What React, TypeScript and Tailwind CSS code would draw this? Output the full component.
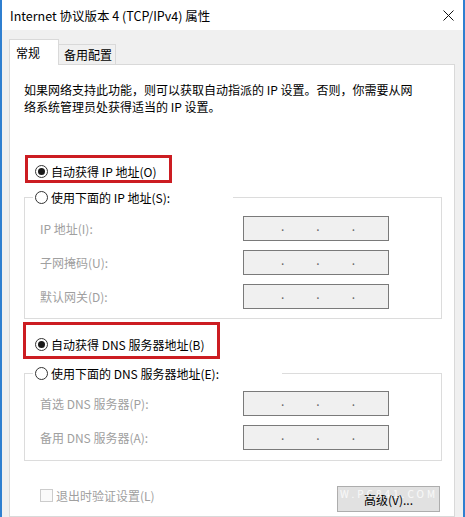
function Radio({ checked }: { checked?: boolean }) {
  return (
    <span className="flex h-[13px] w-[13px] shrink-0 items-center justify-center rounded-full border border-[#333333] bg-white">
      {checked && <span className="h-[7px] w-[7px] rounded-full bg-[#1a1a1a]" />}
    </span>
  );
}

function IpBox() {
  return (
    <div className="flex h-[25px] w-[146px] items-start gap-[32px] border border-[#7a7a7a] bg-[#f0f0f0] pl-[37px] pt-[3px] text-[12px] leading-[12px] text-[#666666]">
      <span>.</span>
      <span>.</span>
      <span>.</span>
    </div>
  );
}

function Field({ label }: { label: string }) {
  return (
    <div className="flex h-[25px] items-center">
      <span className="w-[203px] text-[#a0a0a0]">{label}</span>
      <IpBox />
    </div>
  );
}

export default function App() {
  return (
    <div className="flex h-[517px] w-[465px] flex-col overflow-hidden border-x-2 border-[#2f7fd0] bg-[#f0f0f0] font-['Noto_Sans_CJK_SC',sans-serif] text-[12px] leading-[17px] text-black">
      {/* title bar */}
      <div className="flex h-[30px] shrink-0 items-center justify-between bg-white pl-[8px] pr-[9px]">
        <span className="text-[12.5px]">Internet 协议版本 4 (TCP/IPv4) 属性</span>
        <svg width="11" height="11" viewBox="0 0 11 11">
          <path d="M0.5 0.5 L10.5 10.5 M10.5 0.5 L0.5 10.5" stroke="#111" strokeWidth="1" />
        </svg>
      </div>

      <div className="flex flex-1 flex-col pl-[7px] pt-[9px]">
        {/* tabs */}
        <div className="relative z-10 -mb-px flex items-end">
          <div className="h-[26px] w-[50px] border border-b-0 border-[#d9d9d9] bg-white pl-[6px] pt-[4px]">常规</div>
          <div className="mb-px h-[20px] w-[57px] border-r border-t border-[#d9d9d9] bg-[#f0f0f0] pl-[5px] pt-[1px]">备用配置</div>
        </div>

        {/* panel */}
        <div className="flex w-[446px] flex-1 flex-col border border-[#d9d9d9] bg-white">
          <p className="ml-[14px] mt-[16px]">
            如果网络支持此功能，则可以获取自动指派的 IP 设置。否则，你需要从网
            <br />
            络系统管理员处获得适当的 IP 设置。
          </p>

          <div className="ml-[15px] mt-[40px] w-[147px] border-[3px] border-[#cc1d22] pl-[7px] pt-[5px]">
            <div className="flex h-[17px] items-center gap-[3px]">
              <Radio checked />
              <span>自动获得 IP 地址(O)</span>
            </div>
          </div>

          <fieldset className="ml-[14px] mt-[6px] w-[418px] border border-[#dcdcdc] pb-[9px]">
            <legend className="ml-[8px] flex h-[17px] w-[200px] items-center gap-[3px] bg-white pl-[2px]">
              <Radio />
              <span>使用下面的 IP 地址(S):</span>
            </legend>
            <div className="mt-[10px] flex flex-col gap-[9px] pl-[15px]">
              <Field label="IP 地址(I):" />
              <Field label="子网掩码(U):" />
              <Field label="默认网关(D):" />
            </div>
          </fieldset>

          <div className="ml-[13px] mt-[3px] w-[197px] border-[3px] border-[#cc1d22] pb-[3px] pl-[9px] pt-[11px]">
            <div className="flex h-[17px] items-center gap-[3px]">
              <Radio checked />
              <span>自动获得 DNS 服务器地址(B)</span>
            </div>
          </div>

          <fieldset className="ml-[14px] mt-[6px] w-[418px] border border-[#dcdcdc] pb-[10px]">
            <legend className="ml-[8px] flex h-[17px] w-[249px] items-center gap-[3px] bg-white pl-[2px]">
              <Radio />
              <span>使用下面的 DNS 服务器地址(E):</span>
            </legend>
            <div className="mt-[9px] flex flex-col gap-[9px] pl-[15px]">
              <Field label="首选 DNS 服务器(P):" />
              <Field label="备用 DNS 服务器(A):" />
            </div>
          </fieldset>

          <div className="relative ml-[30px] mr-[14px] mt-[25px] flex items-start justify-between">
            <div className="mt-px flex items-center gap-[3px] text-[#a0a0a0]">
              <span className="h-[13px] w-[13px] border border-[#cccccc] bg-[#fafafa]" />
              <span>退出时验证设置(L)</span>
            </div>
            <div className="flex h-[26px] w-[103px] items-center justify-center border border-[#adadad] bg-[#e1e1e1]">
              高级(V)...
            </div>
            <span className="absolute right-[2px] top-[-1px] text-[10px] tracking-[3px] text-white/80">WWW.PC841.COM</span>
          </div>
        </div>
      </div>
    </div>
  );
}
